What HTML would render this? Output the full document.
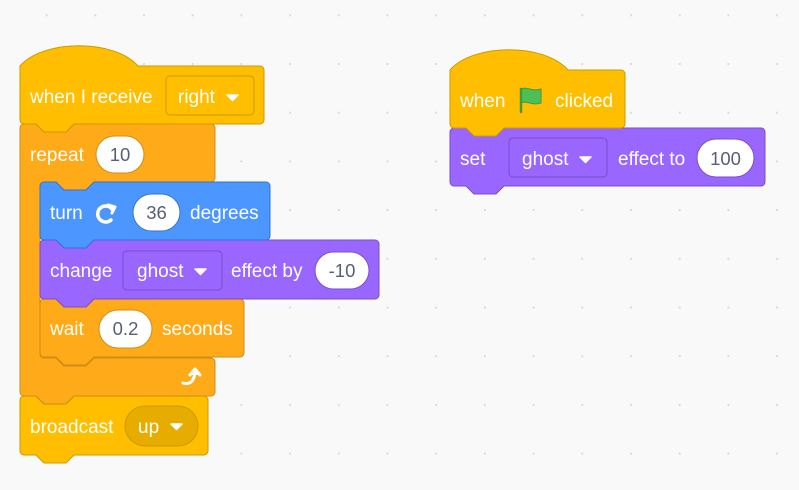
<!DOCTYPE html>
<html><head><meta charset="utf-8"><style>
html,body{margin:0;padding:0;background:#F9F9F9;}
svg{display:block}
text{font-family:"Liberation Sans",sans-serif;font-size:19px;}
.w{fill:#fff}
.g{fill:#575E75;font-size:18.5px}
</style></head><body>
<svg width="799" height="490" viewBox="0 0 799 490" xmlns="http://www.w3.org/2000/svg">
<defs><pattern id="dots" x="45.6" y="14.3" width="48.7" height="48.7" patternUnits="userSpaceOnUse"><circle cx="1" cy="1" r="1.1" fill="#D9D9D9"/></pattern></defs>
<rect width="799" height="490" fill="#F9F9F9"/>
<rect width="799" height="490" fill="url(#dots)"/>

<path d="M20,400 a4,4 0 0 1 4,-4 H36 l8,8 h22 l8,-8 H204 a4,4 0 0 1 4,4 V451 a4,4 0 0 1 -4,4 H74 l-8,8 h-22 l-8,-8 H24 a4,4 0 0 1 -4,-4 Z" fill="#FFBF00" stroke="#CC9900"/>
<path d="M20,128 a4,4 0 0 1 4,-4 H36 l8,8 h22 l8,-8 H211 a4,4 0 0 1 4,4 V178 a4,4 0 0 1 -4,4 H94 l-8,8 h-22 l-8,-8 H44 a4,4 0 0 0 -4,4 V354 a4,4 0 0 0 4,4 H56 l8,8 h22 l8,-8 H211 a4,4 0 0 1 4,4 V392 a4,4 0 0 1 -4,4 H74 l-8,8 h-22 l-8,-8 H24 a4,4 0 0 1 -4,-4 Z" fill="#FFAB19" stroke="#CF8B17"/>
<path d="M40,303 a4,4 0 0 1 4,-4 H56 l8,8 h22 l8,-8 H240 a4,4 0 0 1 4,4 V353 a4,4 0 0 1 -4,4 H94 l-8,8 h-22 l-8,-8 H44 a4,4 0 0 1 -4,-4 Z" fill="#FFAB19" stroke="#CF8B17"/>
<path d="M40,244 a4,4 0 0 1 4,-4 H56 l8,8 h22 l8,-8 H375 a4,4 0 0 1 4,4 V295 a4,4 0 0 1 -4,4 H94 l-8,8 h-22 l-8,-8 H44 a4,4 0 0 1 -4,-4 Z" fill="#9966FF" stroke="#774DCB"/>
<path d="M40,186 a4,4 0 0 1 4,-4 H56 l8,8 h22 l8,-8 H266 a4,4 0 0 1 4,4 V236 a4,4 0 0 1 -4,4 H94 l-8,8 h-22 l-8,-8 H44 a4,4 0 0 1 -4,-4 Z" fill="#4C97FF" stroke="#3373CC"/>
<path d="M20,66 c23.6,-27 94.4,-27 118,0 H260 a4,4 0 0 1 4,4 V120 a4,4 0 0 1 -4,4 H74 l-8,8 h-22 l-8,-8 H24 a4,4 0 0 1 -4,-4 Z" fill="#FFBF00" stroke="#CC9900"/>
<path d="M450,132 a4,4 0 0 1 4,-4 H466 l8,8 h22 l8,-8 H761 a4,4 0 0 1 4,4 V182 a4,4 0 0 1 -4,4 H504 l-8,8 h-22 l-8,-8 H454 a4,4 0 0 1 -4,-4 Z" fill="#9966FF" stroke="#774DCB"/>
<path d="M450,70 c23.6,-27 94.4,-27 118,0 H621 a4,4 0 0 1 4,4 V124 a4,4 0 0 1 -4,4 H504 l-8,8 h-22 l-8,-8 H454 a4,4 0 0 1 -4,-4 Z" fill="#FFBF00" stroke="#CC9900"/>

<text x="30" y="103" class="w">when I receive</text>
<rect x="166" y="76" width="88" height="39" rx="4" fill="#FFBF00" stroke="#CC9900"/>
<text x="178" y="103" class="w">right</text>
<path d="M227 95 h11 l-5.5 5.5 z" fill="#fff" stroke="#fff" stroke-linejoin="round" stroke-width="1.5"/>

<text x="30" y="161" class="w">repeat</text>
<rect x="96" y="136" width="48" height="37" rx="18.5" fill="#fff" stroke="#CF8B17"/>
<text x="120" y="161" class="g" text-anchor="middle">10</text>

<text x="50" y="219" class="w">turn</text>
<g transform="translate(95,201)" fill="none" stroke="#fff" stroke-width="3.5" stroke-linecap="round">
<path d="M17 8 A8 8 0 1 0 16 19"/>
<path d="M13 4 L20 6 L17 12" stroke-width="3" stroke-linejoin="round" fill="#fff"/>
</g>
<rect x="133" y="194" width="47" height="37" rx="18.5" fill="#fff" stroke="#3373CC"/>
<text x="156.5" y="219" class="g" text-anchor="middle">36</text>
<text x="190" y="219" class="w">degrees</text>

<text x="50" y="277" class="w">change</text>
<rect x="123" y="251" width="99" height="39" rx="4" fill="#9966FF" stroke="#774DCB"/>
<text x="137" y="277" class="w">ghost</text>
<path d="M195 269 h11 l-5.5 5.5 z" fill="#fff" stroke="#fff" stroke-linejoin="round" stroke-width="1.5"/>
<text x="231" y="277" class="w">effect by</text>
<rect x="315" y="252" width="54" height="37" rx="18.5" fill="#fff" stroke="#774DCB"/>
<text x="342" y="277" class="g" text-anchor="middle">-10</text>

<text x="50" y="335" class="w">wait</text>
<rect x="99" y="310" width="53" height="38" rx="19" fill="#fff" stroke="#CF8B17"/>
<text x="125.5" y="335" class="g" text-anchor="middle">0.2</text>
<text x="162" y="335" class="w">seconds</text>

<g fill="none" stroke="#fff" stroke-width="3" stroke-linecap="round" stroke-linejoin="round">
<path d="M183 383 Q193 386 195 373"/>
<path d="M190 375 L195 369 L200 375" fill="#fff"/>
</g>

<text x="30" y="433" class="w">broadcast</text>
<rect x="125" y="406" width="73" height="40" rx="20" fill="#E6AC00" stroke="#CC9900"/>
<text x="138" y="433" class="w">up</text>
<path d="M171 424 h11 l-5.5 5.5 z" fill="#fff" stroke="#fff" stroke-linejoin="round" stroke-width="1.5"/>

<text x="460" y="107" class="w">when</text>
<g transform="translate(519,87)">
<path d="M2 2 C8 -1 12 5 22 2 L22 16 C12 19 8 13 2 16 Z" fill="#4CBF56" stroke="#45993D" stroke-width="1"/>
<path d="M2 2 V25" stroke="#45993D" stroke-width="2.5" stroke-linecap="round"/>
</g>
<text x="555" y="107" class="w">clicked</text>

<text x="460" y="165" class="w">set</text>
<rect x="509" y="138" width="98" height="39" rx="4" fill="#9966FF" stroke="#774DCB"/>
<text x="522" y="165" class="w">ghost</text>
<path d="M580 157 h11 l-5.5 5.5 z" fill="#fff" stroke="#fff" stroke-linejoin="round" stroke-width="1.5"/>
<text x="618" y="165" class="w">effect to</text>
<rect x="697" y="139" width="57" height="38" rx="19" fill="#fff" stroke="#774DCB"/>
<text x="725.5" y="165" class="g" text-anchor="middle">100</text>
</svg>
</body></html>
